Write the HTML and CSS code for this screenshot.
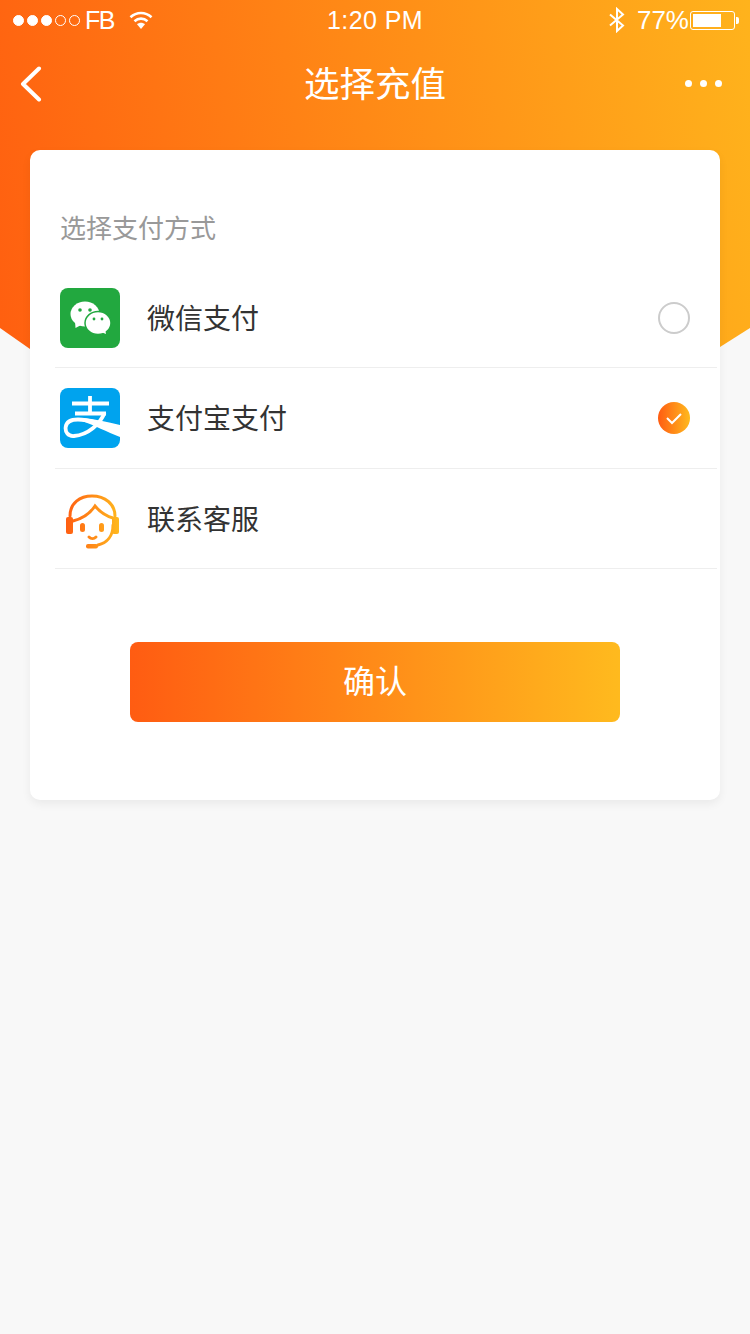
FILE: index.html
```html
<!DOCTYPE html>
<html lang="zh-CN">
<head>
  <meta charset="UTF-8">
  <title>选择充值</title>
  <link rel="stylesheet" href="styles.css">
</head>
<body>
  <div class="page">
    <div class="hero-bg"></div>

    <!-- status bar -->
    <div class="status">
      <div class="status-left">
        <div class="signal">
          <i class="on"></i><i class="on"></i><i class="on"></i><i></i><i></i>
        </div>
        <span class="carrier">FB</span>
        <svg class="wifi" width="24" height="20" viewBox="0 0 24 20">
          <path d="M1.5 7.2C7.5 1.6 16.5 1.6 22.5 7.2" fill="none" stroke="#fff" stroke-width="2.6"/>
          <path d="M5.5 11.2C9.3 7.8 14.7 7.8 18.5 11.2" fill="none" stroke="#fff" stroke-width="2.6"/>
          <path d="M8 14.2C10.4 12.2 13.6 12.2 16 14.2L12 19Z" fill="#fff"/>
        </svg>
      </div>
      <div class="status-time">1:20 PM</div>
      <div class="status-right">
        <svg class="bt" width="18" height="26" viewBox="0 0 18 26">
          <path d="M2 7.5L15 18.5L9 24V2L15 7.5L2 18.5" fill="none" stroke="#fff" stroke-width="2"/>
        </svg>
        <span class="percent">77%</span>
        <div class="battery"><div class="battery-level"></div></div>
      </div>
    </div>

    <!-- nav -->
    <div class="nav">
      <div class="nav-side">
        <svg class="back" width="24" height="36" viewBox="0 0 24 36">
          <path d="M20 2.5L4 18L20 33.5" fill="none" stroke="#fff" stroke-width="4" stroke-linecap="round" stroke-linejoin="round"/>
        </svg>
      </div>
      <h1 class="nav-title">选择充值</h1>
      <div class="nav-side more"><i></i><i></i><i></i></div>
    </div>

    <!-- card -->
    <div class="card">
      <div class="card-label">选择支付方式</div>

      <div class="pay-row">
        <svg class="pay-icon" width="60" height="60" viewBox="0 0 60 60">
          <rect width="60" height="60" rx="8" fill="#22a83f"/>
          <ellipse cx="25" cy="26" rx="14.5" ry="12.5" fill="#fff"/>
          <path d="M15 33L15.5 40L23 36Z" fill="#fff"/>
          <ellipse cx="38" cy="35" rx="13" ry="11.5" fill="#fff" stroke="#22a83f" stroke-width="1.5"/>
          <path d="M41 44L46 46L45 41Z" fill="#fff"/>
          <circle cx="20" cy="22" r="1.8" fill="#22a83f"/>
          <circle cx="30" cy="22" r="1.8" fill="#22a83f"/>
          <circle cx="34" cy="31" r="1.4" fill="#22a83f"/>
          <circle cx="42" cy="31" r="1.4" fill="#22a83f"/>
        </svg>
        <span class="pay-name">微信支付</span>
        <span class="radio"></span>
      </div>

      <div class="pay-row tall">
        <svg class="pay-icon" width="60" height="60" viewBox="0 0 60 60">
          <rect width="60" height="60" rx="8" fill="#00a3ee"/>
          <path d="M12 15.5H49M30 8V25.5M15 25.5H46" fill="none" stroke="#fff" stroke-width="3.8"/>
          <path d="M44.5 25C40 36 28 47 14 48C8 48.5 5 44 5.7 39C6.5 33 12 31.5 18 31.5C30 31.5 45 37 60 44" fill="none" stroke="#fff" stroke-width="3.8"/>
          <path d="M22 30C35 31 47 34 60 37V49C47 44 34 37 22 33Z" fill="#fff"/>
        </svg>
        <span class="pay-name">支付宝支付</span>
        <span class="radio checked">
          <svg width="32" height="32" viewBox="0 0 32 32">
            <path d="M9 16L14 21L23 12" fill="none" stroke="#fff" stroke-width="2"/>
          </svg>
        </span>
      </div>

      <div class="pay-row">
        <svg class="pay-icon" width="60" height="60" viewBox="0 0 60 60">
          <defs>
            <linearGradient id="agentGrad" gradientUnits="userSpaceOnUse" x1="5" y1="0" x2="60" y2="0">
              <stop offset="0" stop-color="#ff5c12"/>
              <stop offset="1" stop-color="#ffba1e"/>
            </linearGradient>
          </defs>
          <g fill="none" stroke="url(#agentGrad)" stroke-width="3" stroke-linecap="round">
            <path d="M10 27C10 14 20 7 32 7C45 7 55 15 55 27"/>
            <path d="M13 32C21 30 29 26 35 17C40 23 46 27 53 29"/>
            <path d="M53 36C53 47 47 54 38 56"/>
            <path d="M29 48C31 50 34 50 36 48"/>
          </g>
          <g fill="url(#agentGrad)">
            <rect x="6" y="28" width="7" height="17" rx="2"/>
            <rect x="52" y="28" width="7" height="17" rx="2"/>
            <rect x="20" y="34" width="5" height="9" rx="2.5"/>
            <rect x="39" y="34" width="5" height="9" rx="2.5"/>
            <rect x="26" y="55" width="12" height="4.5" rx="2"/>
          </g>
        </svg>
        <span class="pay-name">联系客服</span>
      </div>

      <div class="card-action">
        <button class="confirm" type="button">确认</button>
      </div>
    </div>
  </div>
</body>
</html>
```

FILE: styles.css
```css
* {
  box-sizing: border-box;
}

body {
  margin: 0;
  background-color: #f8f8f8;
  font-family: "Noto Sans CJK SC", "Liberation Sans", sans-serif;
  color: #333;
}

.page {
  position: relative;
  width: 750px;
  height: 1334px;
  overflow: hidden;
}

/* orange backdrop, the card sits on top of it */
.hero-bg {
  position: absolute;
  left: 0;
  top: 0;
  width: 750px;
  height: 360px;
  background: linear-gradient(80deg, #ff5f10 0%, #ffb31c 100%);
  clip-path: polygon(0 0, 100% 0, 100% 328px, 720px 347px, 30px 349px, 0 328px);
}

.status {
  position: relative;
  display: flex;
  justify-content: space-between;
  align-items: center;
  height: 40px;
  padding: 0 15px 0 13px;
  color: #fff;
  font-family: "Liberation Sans", sans-serif;
  font-size: 26px;
}

.status-left, .status-right {
  display: flex;
  align-items: center;
  width: 240px;
}

.status-right {
  justify-content: flex-end;
}

.signal {
  display: flex;
  gap: 3px;
}

.signal i {
  width: 11px;
  height: 11px;
  border: 1px solid #fff;
  border-radius: 50%;
}

.signal i.on {
  background-color: #fff;
}

.carrier {
  margin-left: 5px;
  font-size: 25px;
  letter-spacing: -1.5px;
}

.wifi {
  margin-left: 15px;
}

.status-time {
  margin-left: 2px;
  font-size: 25px;
  letter-spacing: 0.4px;
}

.bt {
  margin-right: 11px;
}

.percent {
  margin-right: 1px;
}

.battery {
  position: relative;
  width: 45px;
  height: 19px;
  padding: 2px;
  border: 1px solid #fff;
  border-radius: 3px;
}

.battery::after {
  content: "";
  position: absolute;
  left: 45px;
  top: 5px;
  width: 3px;
  height: 7px;
  background-color: #fff;
  border-radius: 0 2px 2px 0;
}

.battery-level {
  width: 28px;
  height: 100%;
  background-color: #fff;
}

.nav {
  position: relative;
  display: flex;
  justify-content: space-between;
  align-items: center;
  height: 88px;
  padding: 0 28px 0 19px;
}

.nav-side {
  display: flex;
  width: 60px;
}

.nav-title {
  height: 88px;
  margin: -4px 0 0 9px;
  font-size: 35.5px;
  line-height: 88px;
  font-weight: 400;
  color: #fff;
}

.more {
  justify-content: flex-end;
  gap: 8px;
}

.more i {
  width: 7px;
  height: 7px;
  margin-top: -2px;
  background-color: #fff;
  border-radius: 50%;
}

.card {
  position: relative;
  width: 690px;
  height: 650px;
  margin: 22px 0 0 30px;
  background-color: #fff;
  border-radius: 10px;
  box-shadow: 0 4px 10px rgba(0, 0, 0, 0.06);
}

.card-label {
  height: 118px;
  padding: 57px 0 0 30px;
  font-size: 26px;
  line-height: 40px;
  color: #999;
}

.pay-row {
  display: flex;
  align-items: center;
  height: 100px;
  margin: 0 3px 0 25px;
  padding: 0 27px 0 5px;
  border-bottom: 1px solid #eee;
}

.pay-row.tall {
  height: 101px;
  padding-bottom: 1px;
}

.pay-icon {
  flex: none;
}

.pay-name {
  flex: 1;
  margin: -2px 0 0 27px;
  font-size: 28px;
  color: #333;
}

.radio {
  width: 32px;
  height: 32px;
  border: 2px solid #ccc;
  border-radius: 50%;
}

.radio.checked {
  border: none;
  background: linear-gradient(90deg, #ff5c12 0%, #ffba1e 100%);
}

.radio svg {
  display: block;
}

.card-action {
  display: flex;
  justify-content: center;
  padding-top: 73px;
}

.confirm {
  width: 490px;
  height: 80px;
  padding-bottom: 8px;
  border: none;
  border-radius: 8px;
  background: linear-gradient(90deg, #ff5c12 0%, #ffba1e 100%);
  font-family: inherit;
  font-size: 32px;
  color: #fff;
}
```
